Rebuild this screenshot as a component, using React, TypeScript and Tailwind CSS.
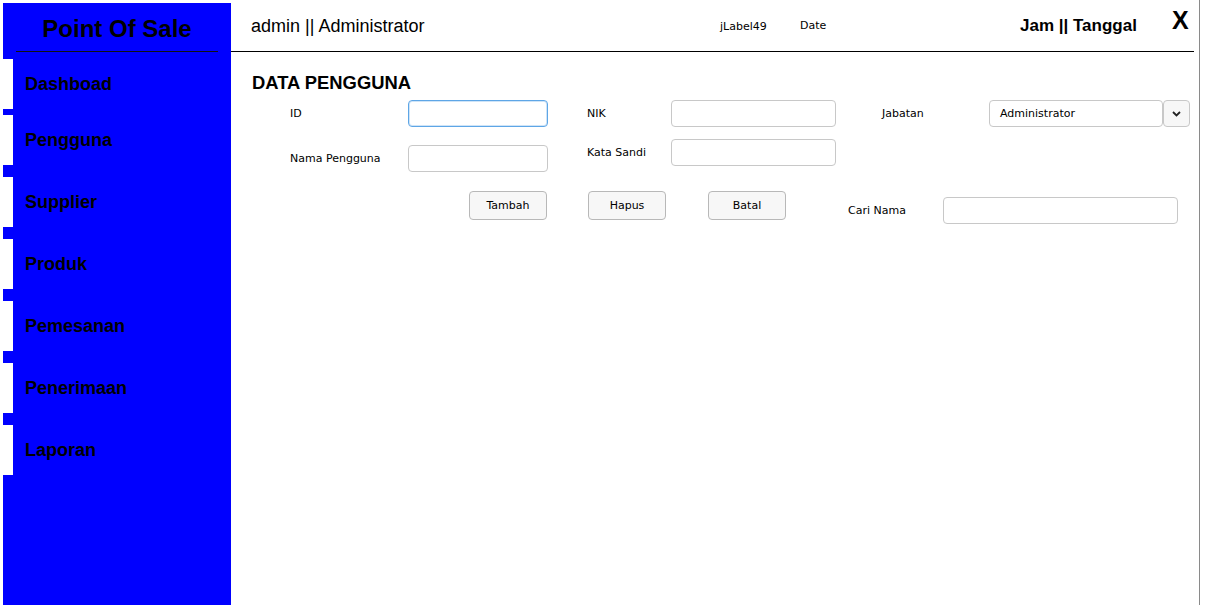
import React from "react";

const items = [
  "Dashboad",
  "Pengguna",
  "Supplier",
  "Produk",
  "Pemesanan",
  "Penerimaan",
  "Laporan",
];

const small = "font-['DejaVu_Sans',sans-serif] text-[11px] text-black";

function Input({ w, focused }: { w: string; focused?: boolean }) {
  return (
    <div
      className={
        w +
        " h-[27px] rounded-[4px] bg-white border " +
        (focused
          ? "border-[#5ea6e6] shadow-[inset_0_0_0_1px_#cfe4f7]"
          : "border-[#c8c8c8]")
      }
    />
  );
}

function Btn({ label, className }: { label: string; className?: string }) {
  return (
    <div
      className={
        "w-[78px] h-[29px] pt-[2px] rounded-[4px] border border-[#b8b8b8] bg-[#f7f7f7] flex items-center justify-center " +
        small +
        " " +
        (className ?? "")
      }
    >
      {label}
    </div>
  );
}

export default function App() {
  return (
    <div className="w-[1210px] h-[605px] bg-white flex overflow-hidden">
      {/* Sidebar */}
      <div className="ml-[3px] mt-[3px] w-[228px] h-[602px] bg-[#0000ff] flex flex-col">
        <div className="pt-[12px] flex flex-col">
          <div className="h-[28px] leading-[28px] text-center text-[24px] font-bold text-black font-['Liberation_Sans',Arial,sans-serif]">
            Point Of Sale
          </div>
          <div className="mt-[8px] mx-[13px] h-px bg-[#111]" />
        </div>
        <div className="mt-[7px] flex flex-col">
          {items.map((it, i) => (
            <div
              key={it}
              className={
                "h-[50px] border-l-[10px] border-white flex items-center pl-[12px] text-[18px] font-bold text-black font-['Liberation_Sans',Arial,sans-serif] " +
                (i === 0 ? "" : i === 1 ? "mt-[6px]" : "mt-[12px]")
              }
            >
              {it}
            </div>
          ))}
        </div>
      </div>

      {/* Main */}
      <div className="w-[968px] h-[605px] flex flex-col">
        <div className="h-[52px] mr-[5px] border-b border-black flex items-center font-['Liberation_Sans',Arial,sans-serif]">
          <div className="pl-[20px] w-[489px] text-[18px] text-black pt-[2px]">
            admin || Administrator
          </div>
          <div className={"w-[80px] pt-[4px] " + small}>jLabel49</div>
          <div className={"w-[220px] pt-[2px] " + small}>Date</div>
          <div className="w-[152px] text-[17px] font-bold text-black pt-[1px]">
            Jam || Tanggal
          </div>
          <div className="text-[25px] font-bold text-black pb-[10px]">X</div>
        </div>

        <div className="pt-[21px] flex flex-col">
          <div className="pl-[21px] h-[20px] leading-[20px] text-[18.4px] font-bold text-black font-['Liberation_Sans',Arial,sans-serif]">
            DATA PENGGUNA
          </div>

          {/* Row 1 */}
          <div className="mt-[7px] flex items-center h-[27px]">
            <div className={"ml-[59px] w-[118px] pt-[2px] " + small}>ID</div>
            <Input w="w-[140px]" focused />
            <div className={"ml-[39px] w-[84px] pt-[2px] " + small}>NIK</div>
            <Input w="w-[165px]" />
            <div className={"ml-[46px] w-[107px] pt-[2px] " + small}>Jabatan</div>
            <div className="w-[174px] h-[27px] pt-[2px] rounded-[4px] border border-[#c8c8c8] bg-white flex items-center pl-[10px]">
              <span className={small}>Administrator</span>
            </div>
            <div className="w-[27px] h-[27px] rounded-[4px] border border-[#c8c8c8] bg-[#f7f7f7] flex items-center justify-center">
              <svg width="9" height="6" viewBox="0 0 9 6">
                <path d="M1 1 L4.5 4.5 L8 1" fill="none" stroke="#222" strokeWidth="1.8" />
              </svg>
            </div>
          </div>

          {/* Row 2 */}
          <div className="mt-[12px] flex items-start">
            <div className="mt-[6px] flex items-center h-[27px]">
              <div className={"ml-[59px] w-[118px] pt-[2px] " + small}>Nama Pengguna</div>
              <Input w="w-[140px]" />
            </div>
            <div className="flex items-center h-[27px]">
              <div className={"ml-[39px] w-[84px] pt-[2px] " + small}>Kata Sandi</div>
              <Input w="w-[165px]" />
            </div>
          </div>

          {/* Row 3 */}
          <div className="mt-[19px] flex items-start">
            <Btn label="Tambah" className="ml-[238px]" />
            <Btn label="Hapus" className="ml-[41px]" />
            <Btn label="Batal" className="ml-[42px]" />
            <div className="mt-[6px] ml-[62px] h-[27px] flex items-center">
              <div className={"w-[95px] pt-[2px] " + small}>Cari Nama</div>
              <Input w="w-[235px]" />
            </div>
          </div>
        </div>
      </div>

      <div className="w-px h-[605px] bg-[#8a8a8a]" />
      <div className="flex-1" />
    </div>
  );
}
